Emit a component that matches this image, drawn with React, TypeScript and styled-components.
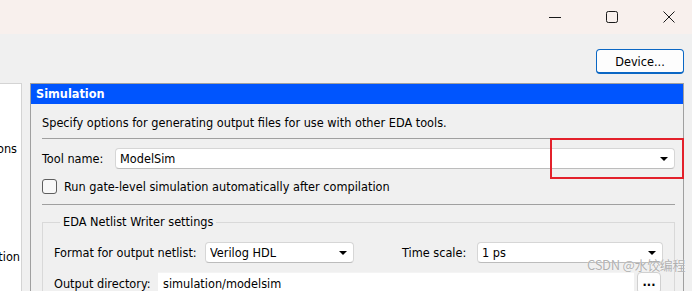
import React from 'react';
import styled, { createGlobalStyle } from 'styled-components';

const GlobalStyle = createGlobalStyle`
  html, body { margin: 0; padding: 0; }
  body {
    background: #f0f0f0;
    font-family: "DejaVu Sans Condensed", "DejaVu Sans", sans-serif;
    font-stretch: condensed;
    font-size: 12.6px;
    color: #000;
    overflow: hidden;
  }
`;

const Window = styled.div`
  position: relative;
  width: 692px;
  height: 291px;
  overflow: hidden;
  display: flex;
  flex-direction: column;
`;

const TitleBar = styled.div`
  height: 34px;
  flex-shrink: 0;
  background: #f8f0ed;
  display: flex;
  align-items: center;
  justify-content: flex-end;
  gap: 45px;
  padding-right: 17px;
`;

const WinIcon = styled.svg`
  width: 12px;
  height: 12px;
  display: block;
`;

const ButtonRow = styled.div`
  display: flex;
  justify-content: flex-end;
  padding: 15px 8px 9px 0;
  flex-shrink: 0;
`;

const DeviceButton = styled.button`
  width: 88px;
  height: 25px;
  box-sizing: border-box;
  background: #fdfdfd;
  border: 1px solid #0a67c4;
  border-bottom-width: 2px;
  border-radius: 4px;
  font: inherit;
  color: #000;
  padding: 0;
`;

const Body = styled.div`
  flex: 1;
  display: flex;
  gap: 8px;
  padding-right: 8px;
  min-height: 0;
`;

const Tree = styled.div`
  width: 22px;
  box-sizing: border-box;
  background: #fff;
  border-top: 1px solid #d4d4d4;
  border-right: 1px solid #d4d4d4;
  overflow: hidden;
  display: flex;
  flex-direction: column;
  padding-top: 2px;
`;

const TreeItem = styled.div<{ $end: number }>`
  height: 18px;
  flex-shrink: 0;
  display: flex;
  justify-content: flex-end;
  align-items: center;
  padding-right: ${(p) => p.$end}px;
  white-space: nowrap;
  line-height: 18px;
`;

const Panel = styled.div`
  flex: 1;
  box-sizing: border-box;
  border: 1px solid #a0a0a0;
  border-bottom: none;
  background: #f0f0f0;
  display: flex;
  flex-direction: column;
`;

const PanelHeader = styled.div`
  height: 20px;
  line-height: 20px;
  background: #0055fe;
  color: #fff;
  font-weight: bold;
  padding-left: 5px;
`;

const PanelContent = styled.div`
  padding: 11px 8px 0 11px;
  display: flex;
  flex-direction: column;
`;

const Description = styled.div`
  height: 16px;
  line-height: 16px;
  white-space: nowrap;
`;

const Separator = styled.div<{ $top: number }>`
  height: 1px;
  background: #a0a0a0;
  margin-top: ${(p) => p.$top}px;
`;

const Row = styled.div<{ $top: number; $height: number }>`
  display: flex;
  align-items: center;
  margin-top: ${(p) => p.$top}px;
  height: ${(p) => p.$height}px;
`;

const Label = styled.span<{ $width?: number; $left?: number }>`
  white-space: nowrap;
  flex-shrink: 0;
  ${(p) => (p.$width ? `width: ${p.$width}px;` : '')}
  ${(p) => (p.$left ? `margin-left: ${p.$left}px;` : '')}
`;

const Combo = styled.div<{ $width?: number }>`
  box-sizing: border-box;
  height: 21px;
  ${(p) => (p.$width ? `width: ${p.$width}px; flex-shrink: 0;` : 'flex: 1;')}
  background: #fff;
  border: 1px solid #d6d6d6;
  border-bottom-color: #bcbcbc;
  border-radius: 4px;
  display: flex;
  align-items: center;
  padding: 0 6px 0 4px;
  white-space: nowrap;
`;

const ComboText = styled.span`
  flex: 1;
  overflow: hidden;
`;

const Arrow = styled.span`
  width: 0;
  height: 0;
  border-left: 4px solid transparent;
  border-right: 4px solid transparent;
  border-top: 4px solid #000;
`;

const CheckBox = styled.span`
  width: 15px;
  height: 15px;
  box-sizing: border-box;
  border: 1px solid #5e5e5e;
  border-radius: 3px;
  background: #f8f8f8;
  flex-shrink: 0;
  margin-right: 7px;
`;

const Group = styled.fieldset`
  margin: 9px 0 0 0;
  padding: 12px 11px 0 11px;
  border: 1px solid #d9d9d9;
  border-radius: 0;
  min-width: 0;
`;

const Legend = styled.legend`
  margin-left: 6px;
  padding: 0 3px;
  line-height: 16px;
`;

const PathInput = styled.div`
  box-sizing: border-box;
  width: 476px;
  height: 22px;
  flex-shrink: 0;
  background: #fff;
  border-top: 1px solid #f4f4f4;
  padding-left: 5px;
  display: flex;
  align-items: center;
`;

const BrowseButton = styled.button`
  box-sizing: border-box;
  width: 24px;
  height: 22px;
  margin-left: 3px;
  background: #fdfdfd;
  border: 1px solid #d0d0d0;
  border-radius: 4px;
  font: inherit;
  font-weight: bold;
  line-height: 12px;
  padding: 0;
  display: flex;
  align-items: flex-end;
  justify-content: center;
  padding-bottom: 5px;
`;

const Annotation = styled.div`
  position: absolute;
  left: 550px;
  top: 138px;
  width: 134px;
  height: 41px;
  box-sizing: border-box;
  border: 2px solid #e3212b;
  pointer-events: none;
`;

const Watermark = styled.div`
  position: absolute;
  left: 587px;
  top: 257px;
  font-family: "Noto Sans CJK SC", "Noto Sans", sans-serif;
  font-stretch: normal;
  font-size: 13px;
  line-height: 16px;
  letter-spacing: -0.3px;
  color: rgba(150, 150, 150, 0.75);
  text-shadow: 0 0 1px #fff;
  white-space: nowrap;
  pointer-events: none;
`;

const treeRows: { text: string; end: number }[] = [
  { text: '', end: 0 },
  { text: '', end: 0 },
  { text: '', end: 0 },
  { text: 'IP Catalog Search Locations', end: 4 },
  { text: '', end: 0 },
  { text: '', end: 0 },
  { text: '', end: 0 },
  { text: '', end: 0 },
  { text: '', end: 0 },
  { text: 'Incremental Compilation', end: 1 },
  { text: '', end: 0 },
];

export default function App() {
  return (
    <Window>
      <GlobalStyle />
      <TitleBar>
        <WinIcon viewBox="0 0 12 12">
          <line x1="0" y1="6.5" x2="12" y2="6.5" stroke="#1a1a1a" strokeWidth="1" />
        </WinIcon>
        <WinIcon viewBox="0 0 12 12">
          <rect x="0.5" y="0.5" width="11" height="11" rx="1.8" fill="none" stroke="#1a1a1a" strokeWidth="1" />
        </WinIcon>
        <WinIcon viewBox="0 0 12 12">
          <path d="M0.5 0.5 L11.5 11.5 M11.5 0.5 L0.5 11.5" stroke="#1a1a1a" strokeWidth="1" />
        </WinIcon>
      </TitleBar>
      <ButtonRow>
        <DeviceButton>Device...</DeviceButton>
      </ButtonRow>
      <Body>
        <Tree>
          {treeRows.map((r, i) => (
            <TreeItem key={i} $end={r.end}>{r.text}</TreeItem>
          ))}
        </Tree>
        <Panel>
          <PanelHeader>Simulation</PanelHeader>
          <PanelContent>
            <Description>Specify options for generating output files for use with other EDA tools.</Description>
            <Separator $top={7} />
            <Row $top={9} $height={21}>
              <Label $width={73}>Tool name:</Label>
              <Combo>
                <ComboText>ModelSim</ComboText>
                <Arrow />
              </Combo>
            </Row>
            <Row $top={10} $height={15}>
              <CheckBox />
              <Label>Run gate-level simulation automatically after compilation</Label>
            </Row>
            <Separator $top={10} />
            <Group>
              <Legend>EDA Netlist Writer settings</Legend>
              <Row $top={0} $height={21}>
                <Label $width={151}>Format for output netlist:</Label>
                <Combo $width={149}>
                  <ComboText>Verilog HDL</ComboText>
                  <Arrow />
                </Combo>
                <Label $width={75} $left={48}>Time scale:</Label>
                <Combo $width={186}>
                  <ComboText>1 ps</ComboText>
                  <Arrow />
                </Combo>
              </Row>
              <Row $top={9} $height={22}>
                <Label $width={104}>Output directory:</Label>
                <PathInput>simulation/modelsim</PathInput>
                <BrowseButton>...</BrowseButton>
              </Row>
            </Group>
          </PanelContent>
        </Panel>
      </Body>
      <Annotation />
      <Watermark>CSDN @水饺编程</Watermark>
    </Window>
  );
}
